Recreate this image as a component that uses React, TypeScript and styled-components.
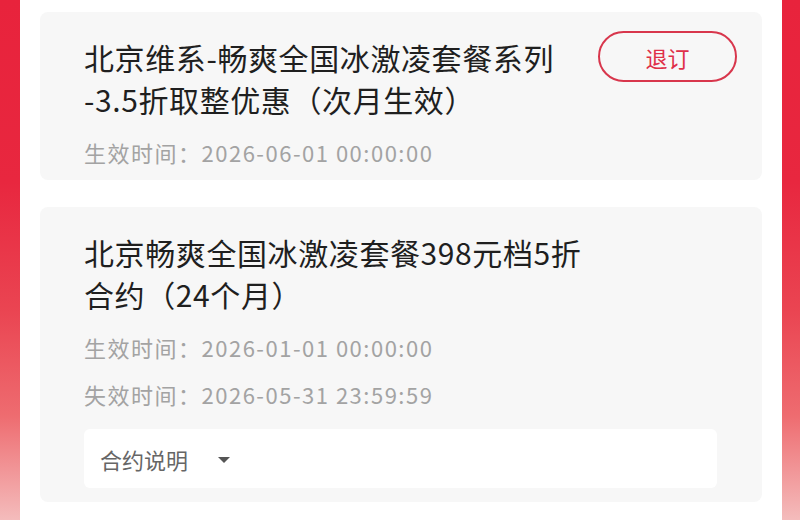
import React from 'react'
import styled, { createGlobalStyle } from 'styled-components'

const GlobalStyle = createGlobalStyle`
  html, body {
    margin: 0;
    padding: 0;
  }
  body {
    font-family: "Noto Sans CJK SC", "Noto Sans", sans-serif;
    overflow: hidden;
  }
`

interface Plan {
  title: string[]
  start: string
  end?: string
  cancellable?: boolean
  contract?: boolean
}

const plans: Plan[] = [
  {
    title: ['北京维系-畅爽全国冰激凌套餐系列', '-3.5折取整优惠（次月生效）'],
    start: '2026-06-01 00:00:00',
    cancellable: true,
  },
  {
    title: ['北京畅爽全国冰激凌套餐398元档5折', '合约（24个月）'],
    start: '2026-01-01 00:00:00',
    end: '2026-05-31 23:59:59',
    contract: true,
  },
]

export default function App() {
  return (
    <>
      <GlobalStyle />
      <Page>
        <Main>
          {plans.map((plan, i) => (
            <Card key={i}>
              <Header>
                <Title>
                  {plan.title.map((line, j) => (
                    <React.Fragment key={j}>
                      {j > 0 && <br />}
                      {line}
                    </React.Fragment>
                  ))}
                </Title>
                {plan.cancellable && <CancelButton>退订</CancelButton>}
              </Header>
              <Meta>生效时间：{plan.start}</Meta>
              {plan.end && <Meta>失效时间：{plan.end}</Meta>}
              {plan.contract && (
                <ContractBox>
                  <span>合约说明</span>
                  <Caret />
                </ContractBox>
              )}
            </Card>
          ))}
        </Main>
      </Page>
    </>
  )
}

const Page = styled.div`
  display: flex;
  height: 520px;
  padding: 0 18px 0 20px;
  background: linear-gradient(
    180deg,
    #e8233c 0%,
    #e8273f 35%,
    #ea4552 60%,
    #ee6c70 80%,
    #f4bcbc 100%
  );
`

const Main = styled.div`
  flex: 1;
  background: #fff;
  padding: 12px 20px 0 20px;
  display: flex;
  flex-direction: column;
  gap: 27px;
`

const Card = styled.div`
  background: #f7f7f7;
  border-radius: 8px;
  padding: 19px 25px 14px 44px;
  display: flex;
  flex-direction: column;
`

const Header = styled.div`
  display: flex;
  justify-content: space-between;
  align-items: flex-start;
  margin-bottom: 18px;
`

const Title = styled.div`
  padding-top: 5px;
  font-size: 30px;
  line-height: 42px;
  letter-spacing: 0.6px;
  color: #1f1f1f;
`

const CancelButton = styled.button`
  width: 139px;
  height: 51px;
  border: 2px solid #d8364c;
  border-radius: 26px;
  background: transparent;
  color: #df2f48;
  font-family: inherit;
  font-size: 22px;
  padding: 0;
  display: flex;
  align-items: center;
  justify-content: center;
`

const Meta = styled.div`
  font-size: 22px;
  line-height: 28px;
  letter-spacing: 1.5px;
  color: #a3a3a3;
  & + & {
    margin-top: 19px;
  }
`

const ContractBox = styled.div`
  margin: 21px 20px 0 0;
  height: 59px;
  background: #fff;
  border-radius: 6px;
  padding-left: 16px;
  display: flex;
  align-items: center;
  gap: 30px;
  font-size: 22px;
  color: #666;
`

const Caret = styled.span`
  width: 0;
  height: 0;
  border-left: 6px solid transparent;
  border-right: 6px solid transparent;
  border-top: 6px solid #555;
  margin-top: 2px;
`
